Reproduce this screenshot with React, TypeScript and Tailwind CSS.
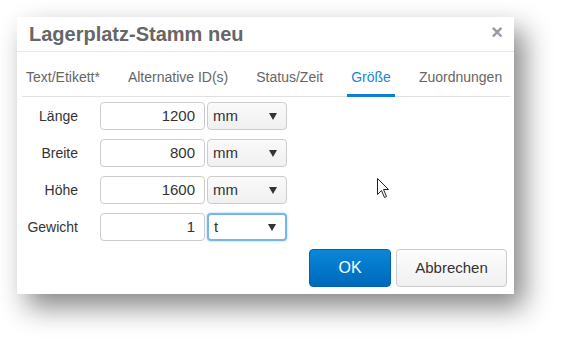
import React from "react";

const rows = [
  { label: "Länge", value: "1200", unit: "mm", focus: false },
  { label: "Breite", value: "800", unit: "mm", focus: false },
  { label: "Höhe", value: "1600", unit: "mm", focus: false },
  { label: "Gewicht", value: "1", unit: "t", focus: true },
];

const tabs = ["Text/Etikett*", "Alternative ID(s)", "Status/Zeit", "Größe", "Zuordnungen"];

function Arrow() {
  return (
    <svg width="8" height="7" viewBox="0 0 8 7" className="shrink-0">
      <path d="M0 0 L8 0 L4 7 Z" fill="#333" />
    </svg>
  );
}

export default function App() {
  return (
    <div
      className="relative w-[562px] h-[343px] bg-white pt-[17px] pl-[17px]"
      style={{ fontFamily: '"Liberation Sans", Arial, sans-serif' }}
    >
      <div className="w-[497px] h-[277px] bg-white flex flex-col shadow-[10px_13px_26px_rgba(0,0,0,0.48)]">
        {/* header */}
        <div className="h-[35px] flex items-center justify-between pl-[12px] pr-[11px] border-b border-[#e8e8e8]">
          <span className="text-[20px] font-bold text-[#666] leading-none -mt-[1px]">Lagerplatz-Stamm neu</span>
          <span className="text-[20px] font-bold text-[#999] leading-none -mt-[4px]">×</span>
        </div>
        {/* tabs */}
        <div className="ml-[5px] mr-[4px] h-[45px] border-b border-[#e0e0e0] flex gap-[20px] pl-0">
          {tabs.map((t) => {
            const active = t === "Größe";
            return (
              <div
                key={t}
                className={
                  "h-[45px] px-[4px] flex items-center pt-[9px] text-[14px] whitespace-nowrap border-b-[3px] " +
                  (active ? "text-[#1a86d8] border-[#0a7fd5]" : "text-[#666] border-transparent")
                }
              >
                {t}
              </div>
            );
          })}
        </div>
        {/* form */}
        <div className="flex flex-col gap-[9px] pt-[5px]">
          {rows.map((r) => (
            <div key={r.label} className="flex items-center h-[28px]">
              <div className="w-[61px] text-right text-[14px] text-[#333]">{r.label}</div>
              <div className="ml-[22px] w-[105px] h-[28px] border border-[#ccc] rounded-[4px] bg-white flex items-center justify-end pr-[9px] text-[15px] text-[#333]">
                {r.value}
              </div>
              <div
                className={
                  "ml-[2px] w-[80px] h-[28px] rounded-[4px] flex items-center justify-between pl-[5px] pr-[9px] text-[15px] text-[#333] " +
                  (r.focus
                    ? "border-2 border-[#79b6e6] bg-white shadow-[0_0_3px_rgba(102,175,233,0.6)] pl-[4px] pr-[8px]"
                    : "border border-[#ccc] bg-gradient-to-b from-[#fafafa] to-[#f0f0f0]")
                }
              >
                <span>{r.unit}</span>
                <Arrow />
              </div>
            </div>
          ))}
        </div>
        {/* buttons */}
        <div className="flex justify-end gap-[5px] pr-[7px] mt-[8px]">
          <button className="w-[82px] h-[38px] rounded-[4px] bg-gradient-to-b from-[#0a87d9] to-[#0069ba] border border-[#0062ad] text-white text-[16px]">
            OK
          </button>
          <button className="w-[111px] h-[38px] rounded-[4px] bg-gradient-to-b from-[#fdfdfd] to-[#f0f0f0] border border-[#ccc] text-[#333] text-[15px]">
            Abbrechen
          </button>
        </div>
      </div>
      {/* mouse cursor */}
      <svg className="absolute left-[377px] top-[178px]" width="13" height="21" viewBox="0 0 13 21">
        <path d="M0.5 0.5 L0.5 16.5 L4.5 12.5 L7.5 19.5 L9.5 18.5 L6.5 11.5 L11.5 11.5 Z" fill="white" stroke="#222" strokeWidth="1" />
      </svg>
    </div>
  );
}
